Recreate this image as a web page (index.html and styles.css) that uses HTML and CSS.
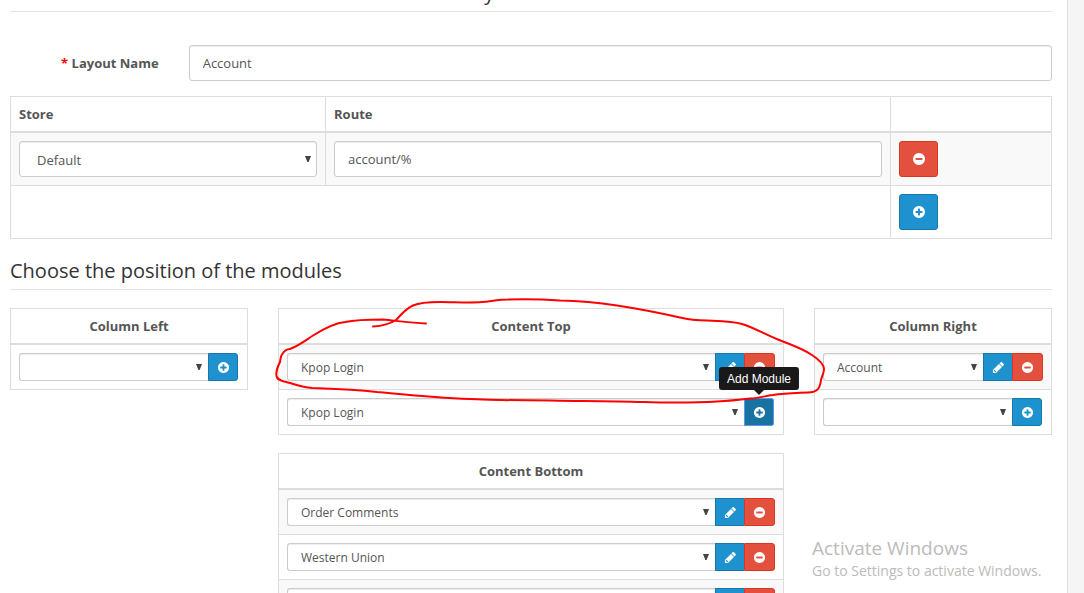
FILE: index.html
```html
<!DOCTYPE html>
<html lang="en">
<head>
<meta charset="utf-8">
<title>Layouts</title>
<meta name="viewport" content="width=device-width, initial-scale=1">
<link rel="stylesheet" href="styles.css">
</head>
<body>
<svg class="sprite" aria-hidden="true">
  <symbol id="plus" viewBox="0 0 1792 1792"><path d="M1344 960v-128q0-26-19-45t-45-19h-256v-256q0-26-19-45t-45-19h-128q-26 0-45 19t-19 45v256h-256q-26 0-45 19t-19 45v128q0 26 19 45t45 19h256v256q0 26 19 45t45 19h128q26 0 45-19t19-45v-256h256q26 0 45-19t19-45zm320-64q0 209-103 385.500t-279.500 279.500-385.500 103-385.500-103-279.500-279.500-103-385.500 103-385.500 279.500-279.500 385.500-103 385.500 103 279.500 279.500 103 385.500z"/></symbol>
  <symbol id="minus" viewBox="0 0 1792 1792"><path d="M1344 960v-128q0-26-19-45t-45-19h-768q-26 0-45 19t-19 45v128q0 26 19 45t45 19h768q26 0 45-19t19-45zm320-64q0 209-103 385.500t-279.500 279.500-385.500 103-385.500-103-279.500-279.500-103-385.500 103-385.500 279.500-279.500 385.500-103 385.500 103 279.500 279.500 103 385.500z"/></symbol>
  <symbol id="pencil" viewBox="0 0 1792 1792"><path d="M491 1536l91-91-235-235-91 91v107h128v128h107zm469-1120l416 416-832 832h-416v-416zm683 96q0 53-37 90l-166 166-416-416 166-165q36-38 90-38 53 0 91 38l235 234q37 39 37 91z"/></symbol>
</svg>
<main class="panel">
  <form>
    <section class="stores">
      <h2 class="legend">Choose the store and routes to be used with this layout</h2>
      <div class="row form-row">
        <label class="name-label" for="name"><span class="required">*</span> Layout Name</label>
        <div class="cell"><input class="control" id="name" type="text" value="Account"></div>
      </div>
      <table class="table routes">
        <colgroup><col class="col-store"><col class="col-route"><col class="col-action"></colgroup>
        <thead><tr><th scope="col">Store</th><th scope="col">Route</th><th></th></tr></thead>
        <tbody>
          <tr>
            <td><div class="select"><select class="control" aria-label="Store"><option>Default</option></select></div></td>
            <td><input class="control" type="text" value="account/%" aria-label="Route"></td>
            <td><button class="btn danger" type="button" aria-label="Remove"><svg class="icon"><use href="#minus"/></svg></button></td>
          </tr>
          <tr>
            <td colspan="2"></td>
            <td><button class="btn primary" type="button" aria-label="Add Route"><svg class="icon"><use href="#plus"/></svg></button></td>
          </tr>
        </tbody>
      </table>
    </section>
    <section>
      <h2 class="legend">Choose the position of the modules</h2>
      <div class="row modules">
        <div class="cell">
          <table class="table">
            <thead><tr><th scope="col">Column Left</th></tr></thead>
            <tbody class="plain">
              <tr><td><div class="group add"><div class="select"><select class="control" aria-label="Column Left module"><option></option></select></div><button class="btn primary last" type="button" aria-label="Add Module"><svg class="icon"><use href="#plus"/></svg></button></div></td></tr>
            </tbody>
          </table>
        </div>
        <div class="cell">
          <table class="table">
            <thead><tr><th scope="col">Content Top</th></tr></thead>
            <tbody>
              <tr><td><div class="group"><div class="select"><select class="control" aria-label="Content Top module 1"><option>Kpop Login</option></select></div><button class="btn primary" type="button" aria-label="Edit"><svg class="icon"><use href="#pencil"/></svg></button><button class="btn danger last" type="button" aria-label="Remove"><svg class="icon"><use href="#minus"/></svg></button></div></td></tr>
              <tr><td><div class="group add"><div class="select"><select class="control" aria-label="New Content Top module"><option>Kpop Login</option></select></div><div class="tip-anchor"><button class="btn primary last active" type="button" aria-describedby="tip" aria-label="Add Module"><svg class="icon"><use href="#plus"/></svg></button><div class="tooltip" id="tip" role="tooltip">Add Module</div></div></div></td></tr>
            </tbody>
          </table>
          <table class="table">
            <thead><tr><th scope="col">Content Bottom</th></tr></thead>
            <tbody>
              <tr><td><div class="group"><div class="select"><select class="control" aria-label="Content Bottom module 1"><option>Order Comments</option></select></div><button class="btn primary" type="button" aria-label="Edit"><svg class="icon"><use href="#pencil"/></svg></button><button class="btn danger last" type="button" aria-label="Remove"><svg class="icon"><use href="#minus"/></svg></button></div></td></tr>
              <tr><td><div class="group"><div class="select"><select class="control" aria-label="Content Bottom module 2"><option>Western Union</option></select></div><button class="btn primary" type="button" aria-label="Edit"><svg class="icon"><use href="#pencil"/></svg></button><button class="btn danger last" type="button" aria-label="Remove"><svg class="icon"><use href="#minus"/></svg></button></div></td></tr>
              <tr><td><div class="group"><div class="select"><select class="control" aria-label="Content Bottom module 3"><option></option></select></div><button class="btn primary" type="button" aria-label="Edit"><svg class="icon"><use href="#pencil"/></svg></button><button class="btn danger last" type="button" aria-label="Remove"><svg class="icon"><use href="#minus"/></svg></button></div></td></tr>
            </tbody>
          </table>
        </div>
        <div class="cell">
          <table class="table">
            <thead><tr><th scope="col">Column Right</th></tr></thead>
            <tbody>
              <tr><td><div class="group"><div class="select"><select class="control" aria-label="Column Right module 1"><option>Account</option></select></div><button class="btn primary" type="button" aria-label="Edit"><svg class="icon"><use href="#pencil"/></svg></button><button class="btn danger last" type="button" aria-label="Remove"><svg class="icon"><use href="#minus"/></svg></button></div></td></tr>
              <tr><td><div class="group add"><div class="select"><select class="control" aria-label="New Column Right module"><option></option></select></div><button class="btn primary last" type="button" aria-label="Add Module"><svg class="icon"><use href="#plus"/></svg></button></div></td></tr>
            </tbody>
          </table>
        </div>
      </div>
    </section>
  </form>
</main>
<svg class="marker" width="1084" height="593" viewBox="0 0 1084 593" aria-hidden="true">
  <path d="M373 326.500C382 326 390 324 396 320C402 314 405 309 413 305.500C421 302 430 302 440 302C455 302 470 303 482 302C492 301 500 299.500 508 299.500C530 299 545 299.500 560 300.500C580 301 600 303 617 305.500C640 309 660 313 680 317.500C690 320 697 320.500 707 320.500C720 321 733 321 742 324C755 328 768 336 783 341.500C795 346 806 351 812 355C818 359 824 364 824 369C824 373 822 376 821 380C820 388 818 392 808 392.500C796 393 784 393 773 395C765 396 757 398.500 750 398.500C738 400 727 401 717 401.500C700 402.500 660 402.500 643 402C610 401 570 401 550 400.500C522 400.500 495 400 470 399C430 397.500 400 394 377 392C350 389 325 388.500 312 388C300 387 292 383 284 381.500C279 380 277 379 276.500 376C275.500 370 278 366 280 362C280.500 358 281 356 282 354.500C284 351 286 349 290 349C300 345 306 340 313 335.500C325 328 335 323 345 322C357 319.500 370 319.500 383 319.500C398 321 412 323 426 323.500"/>
</svg>
<aside class="watermark"><p class="wm-title">Activate Windows</p><p class="wm-text">Go to Settings to activate Windows.</p></aside>
</body>
</html>
```
FILE: styles.css
```css
* { box-sizing: border-box; }
html { height: 100%; overflow: hidden; }
body {
  margin: 0;
  height: 100%;
  overflow: hidden;
  padding-right: 16px;
  background: #f5f5f5;
  color: #555;
  font: 13px/18px "Open Sans", sans-serif;
}
.sprite { position: absolute; width: 0; height: 0; }
.panel {
  min-height: 100%;
  padding: 0 15px 15px 10px;
  background: #fff;
  border-right: 1px solid #ddd;
}
.stores { margin-top: -22px; }
.legend {
  margin: 0 0 18px;
  padding-bottom: 3px;
  border-bottom: 1px solid #e5e5e5;
  color: #333;
  font-size: 20px;
  font-weight: 400;
  line-height: 30px;
}
.stores .legend { margin-bottom: 33px; }
.row { display: grid; margin: 0 -15px; }
.cell { padding: 0 15px; min-width: 0; }
.form-row {
  grid-template-columns: 1fr 5fr;
  align-items: center;
  margin-bottom: 15px;
}
.modules { grid-template-columns: 1fr 2fr 1fr; align-items: start; }
.name-label { padding-right: 15px; text-align: right; font-weight: 700; }
.required { color: #f00; }
.control {
  display: block;
  width: 100%;
  height: 36px;
  margin: 0;
  padding: 0 13px;
  border: 1px solid #ccc;
  border-radius: 3px;
  background: #fff;
  box-shadow: inset 0 1px 1px rgba(0, 0, 0, .075);
  color: #555;
  font: inherit;
}
.select { position: relative; flex: 1; min-width: 0; }
.select .control { appearance: none; padding: 1px 17px 0; }
.select::after {
  content: "";
  position: absolute;
  right: 6px;
  top: calc(50% - 3px);
  width: 6px;
  height: 6px;
  background: #444;
  clip-path: polygon(0 0, 100% 0, 60% 100%, 40% 100%);
  pointer-events: none;
}
.table {
  width: 100%;
  margin-bottom: 18px;
  border-collapse: collapse;
  table-layout: fixed;
}
.table th, .table td { padding: 8px; border: 1px solid #ddd; }
.table th { border-bottom-width: 2px; font-weight: 700; text-align: center; }
.table.routes th { text-align: left; }
.table tbody:not(.plain) tr:nth-child(odd) { background: #f9f9f9; }
.routes { margin-bottom: 17px; }
.col-store { width: 315px; }
.col-action { width: 161px; }
.btn {
  display: flex;
  align-items: center;
  justify-content: center;
  width: 39px;
  height: 36px;
  padding: 0;
  border: 1px solid;
  border-radius: 3px;
  color: #fff;
}
.primary { background: #1e91cf; border-color: #1978ab; }
.danger { background: #e3503e; border-color: #dc3522; }
.icon { width: 14px; height: 14px; fill: currentColor; }
.group { display: flex; }
.group .control {
  height: 28px;
  padding-left: 13px;
  border-right: 0;
  border-radius: 3px 0 0 3px;
  font-size: 12px;
}
.group .btn { width: 29px; height: 28px; border-radius: 0; border-right-width: 0; }
.group .last { width: 31px; border-right-width: 1px; border-radius: 0 3px 3px 0; }
.add { padding-right: 1px; }
.add .last { width: 30px; }
.group .icon { width: 13px; height: 13px; }
.group .active { background: #1872a2; outline: 1px solid #5c97e8; outline-offset: -1px; }
.tip-anchor { position: relative; }
.tooltip {
  position: absolute;
  z-index: 2;
  left: 50%;
  bottom: calc(100% + 8px);
  transform: translateX(-50%);
  padding: 3px 8px 2px;
  border-radius: 3px;
  background: #191919;
  color: #fff;
  font: 12px/18px "Liberation Sans", sans-serif;
  white-space: nowrap;
}
.tooltip::after {
  content: "";
  position: absolute;
  left: calc(50% - 5px);
  top: 100%;
  border: 5px solid transparent;
  border-top-color: #191919;
  border-bottom: 0;
}
.marker { position: absolute; left: 0; top: 0; pointer-events: none; }
.marker path { fill: none; stroke: #f00; stroke-width: 2; stroke-linecap: round; }
.watermark {
  position: absolute;
  right: 36px;
  bottom: 12px;
  width: 236px;
  color: #bbb;
  white-space: nowrap;
}
.watermark p { margin: 0; }
.wm-title { font-size: 19px; line-height: 26px; }
.wm-text { font-size: 14px; line-height: 20px; }
```
